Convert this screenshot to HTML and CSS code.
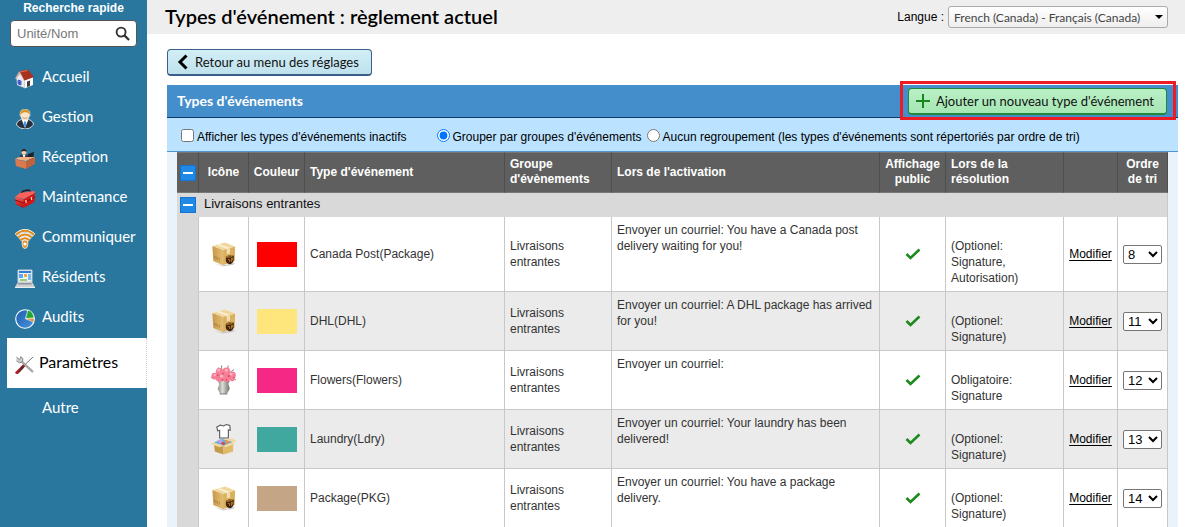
FILE: index.html
```html
<!DOCTYPE html>
<html lang="fr">
<head>
<meta charset="utf-8">
<title>Types d'événement : règlement actuel</title>
<link rel="stylesheet" href="styles.css">
</head>
<body>
<svg class="sprite" aria-hidden="true">
  <defs>
    <linearGradient id="g-box" x1="0" x2="1"><stop offset="0" stop-color="#c9984a"/><stop offset="1" stop-color="#e3be72"/></linearGradient>
    <linearGradient id="g-red" x1="0" y1="0" x2="0" y2="1"><stop offset="0" stop-color="#ff5a50"/><stop offset="1" stop-color="#b80808"/></linearGradient>
    <linearGradient id="g-vase" x1="0" x2="1"><stop offset="0" stop-color="#8c8c86"/><stop offset=".4" stop-color="#dcdcd8"/><stop offset="1" stop-color="#6c6c68"/></linearGradient>
    <linearGradient id="g-pie" x1="0" y1="0" x2="1" y2="1"><stop offset="0" stop-color="#1c5cae"/><stop offset="1" stop-color="#4a96e0"/></linearGradient>
  </defs>
  <symbol id="i-box" viewBox="0 0 28 28">
    <path d="M3 24l10 2.500 13-3-2 2-11 2z" fill="#999" opacity=".5"/>
    <path d="M1.500 5.500L13 9.500V26L2.500 21.500z" fill="url(#g-box)"/>
    <path d="M13 9.500L26 6l-.5 15.500L13 26z" fill="#dab15f"/>
    <path d="M1.500 5.500L15 1.500 26 6 13 9.500z" fill="#f0d79c"/>
    <path d="M6 4.200L9 3.300 20.500 7.500l-3.500 1z" fill="#fbeed0"/>
    <path d="M17 8.500l3.500-1v6l-3.500 1z" fill="#f4deb0"/>
    <path d="M4 16v3M5.500 16.500v3.200M7 17.500v2.500M9 18v3" stroke="#9c7434" stroke-width=".7"/>
    <path d="M16 17q4.500-3 8.500-1.500v5q-1 4-4 4.500-4.500-1-4.500-4z" fill="#3e200c"/>
    <path d="M16.500 17.500q4-2.500 7.500-2-2 2.500-7.500 2zM18 20h2v2.500M22 18.500v4M22 18.500h1.500v2H22" stroke="#c88c30" fill="none" stroke-width=".9"/>
  </symbol>
  <symbol id="i-flowers" viewBox="0 0 28 32">
    <path d="M7 8L9 3M12 6V1M18 6l1-5M21 8l4-3M3 14l-2-1M25 15l2 1" stroke="#7c8478" stroke-width="1"/>
    <path d="M8.500 17h12l-1.500 3 1.500 5-3 5.500h-7L8 25l1.500-4z" fill="url(#g-vase)"/>
    <path d="M10 30.500h8" stroke="#777"/>
    <g fill="#f77f98"><circle cx="5" cy="12" r="3.500"/><circle cx="10" cy="7.500" r="4"/><circle cx="17" cy="7" r="4"/><circle cx="23" cy="11" r="3.800"/><circle cx="10" cy="14" r="4"/><circle cx="17" cy="13.500" r="4.500"/><circle cx="23" cy="15" r="2.500"/></g>
    <g fill="#ffb5c2"><circle cx="9" cy="6" r="1.300"/><circle cx="17" cy="6" r="1.500"/><circle cx="5" cy="11" r="1.200"/><circle cx="22" cy="10" r="1.400"/><circle cx="12" cy="12" r="1.500"/></g>
    <g fill="#dd4e6c"><circle cx="13.500" cy="9.500" r="1.100"/><circle cx="8" cy="11" r="1"/><circle cx="19.500" cy="12" r="1.200"/><circle cx="13" cy="16" r="1"/><circle cx="25" cy="13.500" r=".9"/><circle cx="17" cy="16" r="1"/></g>
  </symbol>
  <symbol id="i-laundry" viewBox="0 0 28 32">
    <path d="M11 1.500l-4 2 1 4 2-.5v8h9V6.500l2 .5-.5-5L17 1l-3 1.500z" fill="#fff" stroke="#555" stroke-width="1.100"/>
    <path d="M4 20l10 3v9l-9-3z" fill="#c39a47"/><path d="M14 23l10-2v8l-10 3z" fill="#dfba69"/>
    <path d="M4 19.500l9-3.500 11 3-10 4z" fill="#5bb0dc"/>
    <path d="M7 18l4-2 3 3-3 2z" fill="#b9a4e8"/><path d="M15 16.500l6 2-4 3z" fill="#f48d49"/><path d="M11 20l3-1 2 2-2 1.500z" fill="#e33d50"/>
    <path d="M4 19.500L0 21l10 3.500 4-1.500zM24 19l4-1-5-2.500-9 .5zM14 23l2 1.500 10-3L24 19z" fill="#f1d8a0"/>
  </symbol>
  <symbol id="i-check" viewBox="0 0 16 12"><path d="M1.500 6l4 4 9-8.500" fill="none" stroke="#1d8a1d" stroke-width="2.600"/></symbol>
  <symbol id="i-home" viewBox="0 0 20 20">
    <path d="M1.500 9l4-5 4 7v8L2 16z" fill="#e9e9f0"/><path d="M9.500 11L18 8v8l-8.500 3.500z" fill="#fafafa"/>
    <path d="M0 9.500L4.500 2l5.500 8-1 1.500L5 5 1.500 10z" fill="#d9b4aa"/>
    <path d="M4.500 2L13 .5 19 8l-9.500 3.500z" fill="#a93120"/><path d="M5.500 2.800L12.500 1.500" stroke="#e0705c"/>
    <path d="M3 11l3 1v4l-3-1zM4.500 11.500v4M3 13l3 1" fill="#8ca0f0" stroke="#3441bc" stroke-width=".8"/>
    <path d="M12 12.500l3-1v5.500l-3 1z" fill="#4c3a34"/>
  </symbol>
  <symbol id="i-person" viewBox="0 0 20 20">
    <path d="M1.500 16q0-4 5-5.500h7q5 1.500 5 5.500-3 4-8.500 4t-8.500-4z" fill="#27303a" stroke="#dfe9ef" stroke-width=".9"/>
    <path d="M6.800 11h6.400L10 19z" fill="#fff"/><path d="M9 12.500h2l.5 3.500-1.500 2-1.500-2z" fill="#3e9ae4"/>
    <ellipse cx="10" cy="6" rx="4.700" ry="5.500" fill="#fae4cc"/><path d="M5 7Q4 0 10.500 0 16 .5 15 7 14 3.500 10.500 3.500 7 3 5 7z" fill="#d9952c" stroke="#fff" stroke-width=".4"/><path d="M7.500 8.500q2.500 2 5 0" stroke="#d29878" fill="none"/>
  </symbol>
  <symbol id="i-desk" viewBox="0 0 20 20">
    <path d="M4 10q0-4 3-4.500h4q3 .5 3 5z" fill="#343a42"/><path d="M7.500 5.500h3L9 10z" fill="#fff"/><circle cx="9" cy="3" r="2.500" fill="#f3d1ae"/><path d="M6.500 3Q6 0 9 0t2.500 3Q9 1 6.500 3z" fill="#2c2520"/>
    <path d="M13 5l6-2-1 7-5 1z" fill="#1c2026"/>
    <path d="M0 10l4-2 16 0-9 4z" fill="#f3ae86"/><path d="M0 10l11 2.500V20L1 17z" fill="#d9794e"/><path d="M11 12.500L20 8v7l-9 5z" fill="#c0633c"/>
  </symbol>
  <symbol id="i-toolbox" viewBox="0 0 20 20">
    <path d="M6 5q1-3 4-3.500L14 1q2 1 1.500 4" fill="none" stroke="#3a1616" stroke-width="1.300"/>
    <path d="M0 8l5-4 14-2 1 2-11 6z" fill="#f9615a"/><path d="M0 8l8.500 2.500V19L1 15.500z" fill="url(#g-red)"/><path d="M8.500 10.500L20 4l-.5 9-11 6z" fill="#d51616"/>
    <path d="M0 11l8.500 3L20 8" fill="none" stroke="#8e0606"/><path d="M11 11v3M16.500 8v3" stroke="#ffd9a4" stroke-width="1.300"/>
  </symbol>
  <symbol id="i-wifi" viewBox="0 0 20 20">
    <g fill="none" stroke="#fff" stroke-width="3.200"><path d="M.8 6Q10-2.500 19.200 6M3.200 8.500Q10 2.500 16.800 8.500M5.500 11.200Q10 7.200 14.500 11.200"/></g>
    <g fill="none" stroke="#e08a1c" stroke-width="1.900"><path d="M.8 6Q10-2.500 19.200 6M3.200 8.500Q10 2.500 16.800 8.500M5.500 11.200Q10 7.200 14.500 11.200"/></g>
    <path d="M7 14q0-3 3-3t3 3l-.5 3q-.5 2.500-2.500 2.500T7.500 17z" fill="#e8962a" stroke="#fff" stroke-width=".7"/><circle cx="10" cy="15" r="1.600" fill="#fff"/>
  </symbol>
  <symbol id="i-laptop" viewBox="0 0 20 20">
    <path d="M3 1h14v12H3z" fill="#eef3f7" stroke="#c2c8cc"/><path d="M4 2h12v2H4z" fill="#2d7ed6"/><path d="M4 5h4v4H4z" fill="#58aaf0"/><path d="M9 5h3v3H9z" fill="#f1a73c"/><path d="M13 5h3v6h-3z" fill="#78bdf0"/><path d="M5 10h7v2H5z" fill="#96cf78"/>
    <path d="M3 13h14l3 5H0z" fill="#cfd2d4"/><path d="M3.500 14h13l.5 1.500H3z" fill="#8f9498"/><path d="M0 18h20v1H0z" fill="#eee"/>
  </symbol>
  <symbol id="i-pie" viewBox="0 0 20 20">
    <circle cx="10" cy="10" r="9.300" fill="url(#g-pie)" stroke="#fff" stroke-width="1.100"/>
    <path d="M10.500 9.500L13 .8A9.300 9.300 0 0 1 19 9z" fill="#27a534" stroke="#fff" stroke-width=".7"/><path d="M10.500 9.800L19.200 9.500q0 2-.8 3.500z" fill="#f08c28" stroke="#fff" stroke-width=".5"/>
  </symbol>
  <symbol id="i-tools" viewBox="0 0 20 20">
    <path d="M18 2L9 10.500" stroke="#777" stroke-width="1"/><path d="M8.500 9l2 2L3 19q-2 .5-3-1.500z" fill="#b01b26"/><path d="M7 10.500l2 2L3.500 18z" fill="#333"/>
    <path d="M6 6l12 11" stroke="#8b8b8b" stroke-width="2.200"/><path d="M6 6l12 11" stroke="#d2d2d2" stroke-width=".8"/>
    <path d="M1.500 2l3 2.500L6 1.500q3 2 1.500 5.500-3 2-6-1" fill="#c9c9c9" stroke="#777" stroke-width=".8"/>
  </symbol>
</svg>

<div class="app">
  <aside class="sidebar">
    <form class="search">
      <label class="search-label" for="q">Recherche rapide</label>
      <div class="search-box">
        <input id="q" type="text" placeholder="Unité/Nom">
        <button class="search-go" type="button" aria-label="Rechercher"><svg viewBox="0 0 16 16"><circle cx="6.500" cy="6.500" r="4.800" fill="none" stroke="#333" stroke-width="2"/><path d="M10 10l5 5" stroke="#333" stroke-width="2.400"/></svg></button>
      </div>
    </form>
    <nav class="nav">
      <a href="#"><svg><use href="#i-home"/></svg>Accueil</a>
      <a href="#"><svg><use href="#i-person"/></svg>Gestion</a>
      <a href="#"><svg><use href="#i-desk"/></svg>Réception</a>
      <a href="#"><svg><use href="#i-toolbox"/></svg>Maintenance</a>
      <a href="#"><svg><use href="#i-wifi"/></svg>Communiquer</a>
      <a href="#"><svg><use href="#i-laptop"/></svg>Résidents</a>
      <a href="#"><svg><use href="#i-pie"/></svg>Audits</a>
      <a href="#" class="active"><svg><use href="#i-tools"/></svg>Paramètres</a>
      <a href="#" class="plain">Autre</a>
    </nav>
  </aside>

  <main class="main">
    <header class="topbar">
      <h1>Types d'événement : règlement actuel</h1>
      <div class="lang">
        <label for="lang">Langue :</label>
        <span class="lang-select"><select id="lang"><option>French (Canada) - Français (Canada)</option></select></span>
      </div>
    </header>

    <div class="content">
      <button type="button" class="btn btn-back"><svg viewBox="0 0 12 16"><path d="M10 1.500L3.500 8l6.500 6.500" fill="none" stroke="#000" stroke-width="3"/></svg>Retour au menu des réglages</button>

      <section class="panel">
        <div class="panel-head">
          <h2>Types d'événements</h2>
          <div class="callout">
            <button type="button" class="btn btn-add"><svg viewBox="0 0 14 14"><path d="M7 0v14M0 7h14" stroke="#17871c" stroke-width="2"/></svg>Ajouter un nouveau type d'événement</button>
          </div>
        </div>
        <div class="filters">
          <label class="inactive"><input type="checkbox">Afficher les types d'événements inactifs</label>
          <label><input type="radio" name="grp" checked>Grouper par groupes d'événements</label>
          <label><input type="radio" name="grp">Aucun regroupement (les types d'événements sont répertoriés par ordre de tri)</label>
        </div>
        <div class="table-wrap">
          <table>
            <colgroup><col class="c-tog"><col class="c-icon"><col class="c-color"><col class="c-type"><col class="c-group"><col class="c-act"><col class="c-pub"><col class="c-res"><col class="c-edit"><col class="c-sort"></colgroup>
            <thead>
              <tr>
                <th class="tog"><button type="button" class="minus" aria-label="Tout réduire"></button></th>
                <th class="mid">Icône</th><th class="mid">Couleur</th><th>Type d'événement</th><th>Groupe d'évènements</th><th>Lors de l'activation</th><th class="mid">Affichage public</th><th>Lors de la résolution</th><th></th><th class="mid">Ordre<br>de tri</th>
              </tr>
            </thead>
            <tbody>
              <tr class="group"><td class="tog"><button type="button" class="minus" aria-label="Réduire le groupe"></button></td><td colspan="9">Livraisons entrantes</td></tr>
              <tr>
                <td class="gutter"></td><td class="mid"><svg class="ico"><use href="#i-box"/></svg></td><td class="mid"><span class="swatch red"></span></td><td>Canada Post(Package)</td><td>Livraisons entrantes</td><td class="act">Envoyer un courriel: You have a Canada post delivery waiting for you!</td><td class="mid"><svg class="check"><use href="#i-check"/></svg></td><td class="res">(Optionel: Signature, Autorisation)</td><td class="mid edit"><a href="#">Modifier</a></td><td class="mid sort"><select aria-label="Ordre de tri"><option>8</option><option>11</option></select></td>
              </tr>
              <tr class="alt">
                <td class="gutter"></td><td class="mid"><svg class="ico"><use href="#i-box"/></svg></td><td class="mid"><span class="swatch yellow"></span></td><td>DHL(DHL)</td><td>Livraisons entrantes</td><td class="act">Envoyer un courriel: A DHL package has arrived for you!</td><td class="mid"><svg class="check"><use href="#i-check"/></svg></td><td class="res">(Optionel: Signature)</td><td class="mid edit"><a href="#">Modifier</a></td><td class="mid sort"><select aria-label="Ordre de tri"><option>11</option></select></td>
              </tr>
              <tr>
                <td class="gutter"></td><td class="mid"><svg class="ico tall"><use href="#i-flowers"/></svg></td><td class="mid"><span class="swatch pink"></span></td><td>Flowers(Flowers)</td><td>Livraisons entrantes</td><td class="act">Envoyer un courriel:</td><td class="mid"><svg class="check"><use href="#i-check"/></svg></td><td class="res">Obligatoire: Signature</td><td class="mid edit"><a href="#">Modifier</a></td><td class="mid sort"><select aria-label="Ordre de tri"><option>12</option></select></td>
              </tr>
              <tr class="alt">
                <td class="gutter"></td><td class="mid"><svg class="ico tall"><use href="#i-laundry"/></svg></td><td class="mid"><span class="swatch teal"></span></td><td>Laundry(Ldry)</td><td>Livraisons entrantes</td><td class="act">Envoyer un courriel: Your laundry has been delivered!</td><td class="mid"><svg class="check"><use href="#i-check"/></svg></td><td class="res">(Optionel: Signature)</td><td class="mid edit"><a href="#">Modifier</a></td><td class="mid sort"><select aria-label="Ordre de tri"><option>13</option></select></td>
              </tr>
              <tr>
                <td class="gutter"></td><td class="mid"><svg class="ico"><use href="#i-box"/></svg></td><td class="mid"><span class="swatch tan"></span></td><td>Package(PKG)</td><td>Livraisons entrantes</td><td class="act">Envoyer un courriel: You have a package delivery.</td><td class="mid"><svg class="check"><use href="#i-check"/></svg></td><td class="res">(Optionel: Signature)</td><td class="mid edit"><a href="#">Modifier</a></td><td class="mid sort"><select aria-label="Ordre de tri"><option>14</option></select></td>
              </tr>
            </tbody>
          </table>
        </div>
      </section>
    </div>
  </main>
</div>
</body>
</html>
```
FILE: styles.css
```css
* { box-sizing: border-box; }
body { margin: 0; background: #fff; color: #000; font: 12px/16px "Liberation Sans", Arial, sans-serif; }
.sprite { position: absolute; width: 0; height: 0; }
.app { display: flex; height: 100vh; overflow: hidden; }

.sidebar { flex: 0 0 147px; min-width: 0; background: #29779f; }
.search { padding: 0 10px; }
.search-label { display: block; text-align: center; color: #fff; font-weight: bold; line-height: 16px; }
.search-box { display: flex; align-items: center; height: 27px; margin-top: 4px; padding: 0 6px; background: #fff; border: 1px solid #555; border-radius: 4px; }
.search-box input { flex: 1; width: 100%; min-width: 0; padding: 0; border: 0; outline: 0; background: none; font: 13px "Liberation Sans", Arial, sans-serif; }
.search-box input::placeholder { color: #777; }
.search-go { width: 15px; height: 15px; padding: 0; border: 0; background: none; }
.search-go svg { display: block; width: 15px; height: 15px; }
.nav { display: flex; flex-direction: column; padding: 9px 0 0 7px; }
.nav a { display: flex; align-items: center; gap: 7px; height: 40px; padding-left: 8px; color: #fff; font: 15px/20px Lato, sans-serif; text-decoration: none; }
.nav svg { width: 20px; height: 20px; margin-top: 6px; }
.nav a.active { height: 50px; gap: 4px; margin-top: 2px; padding-bottom: 2px; background: #fff; color: #000; border-right: 1px dotted #ccc; font-size: 16px; }
.nav a.plain { padding-left: 35px; padding-bottom: 2px; }

.main { flex: 1; min-width: 0; }
.topbar { display: flex; justify-content: space-between; align-items: center; height: 34px; padding: 0 17px 0 18px; background: #eee; }
.topbar h1 { margin: 0 0 2px; font: 600 20px/24px Lato, sans-serif; }
.lang { display: flex; align-items: center; gap: 4px; }
.lang-select { position: relative; width: 220px; }
.lang-select select { display: block; width: 100%; height: 22px; padding: 0 5px; appearance: none; border: 1px solid #aaa; border-radius: 3px; background: linear-gradient(#fff, #eee); color: #444; font: 12px Lato, sans-serif; }
.lang-select::after { content: ""; position: absolute; right: 5px; top: 9px; border: 4px solid transparent; border-top-color: #000; border-bottom: 0; pointer-events: none; }

.content { padding: 15px 7px 0 20px; }
.btn { display: flex; align-items: center; height: 27px; border-radius: 4px; color: #111; font: 13px/20px Lato, sans-serif; white-space: nowrap; }
.btn-back { gap: 6px; padding: 0 12px 0 8px; border: 1px solid #3a5f8a; border-bottom-width: 2px; background: linear-gradient(#d2eef6, #bfe2ec); }
.btn-back svg { width: 13px; height: 16px; }
.btn-add { gap: 6px; padding: 0 12px 0 7px; border: 1px solid #218a3a; border-bottom-width: 2px; background: linear-gradient(#b9f0c5, #a6e6b4); }
.btn-add svg { width: 14px; height: 14px; }

.panel { margin-top: 9px; }
.panel-head { display: flex; align-items: center; justify-content: space-between; height: 33px; padding: 0 11px 0 10px; background: #458ecc; border-bottom: 1px solid #0f3a66; }
.panel-head h2 { margin: 0; color: #fff; font: bold 14px/20px Lato, sans-serif; }
.callout { position: relative; }
.callout::after { content: ""; position: absolute; inset: -7px -9px -5px -8px; border: 3px solid #ed1c24; pointer-events: none; }
.filters { display: flex; align-items: center; height: 34px; padding: 4px 14px 0; background: #bbe3ff; border-bottom: 1px solid #4c94d4; white-space: nowrap; }
.filters label { display: flex; align-items: center; gap: 3px; margin-right: 5px; }
.filters label.inactive { margin-right: 30px; }
.filters input { width: 13px; height: 13px; margin: 0 0 3px; accent-color: #0075ff; }

.table-wrap { padding: 0 10px; background: #eaf2fa; }
table { width: 100%; table-layout: fixed; border-collapse: separate; border-spacing: 0; }
.c-tog { width: 22px; } .c-icon { width: 50px; } .c-color { width: 56px; } .c-type { width: 200px; } .c-group { width: 107px; }
.c-pub { width: 66px; } .c-res { width: 118px; } .c-edit { width: 54px; } .c-sort { width: 50px; }
th { height: 41px; padding: 4px 5px 5px; background: #5f5f5f; color: #fff; line-height: 15px; text-align: left; border-right: 1px solid #4e4e4e; border-top: 1px solid #777; border-bottom: 1px solid #777; }
td { padding: 5px; background: #fff; color: #333; border-right: 1px solid #c8c8c8; border-bottom: 1px solid #c8c8c8; }
.alt td { background: #ebebeb; }
th.mid, td.mid { padding-left: 0; padding-right: 0; text-align: center; }
th.tog, td.tog { padding: 0 0 0 3px; }
tr td.gutter { background: #d9d9d9; border-bottom-color: #d9d9d9; }
.group td { height: 24px; padding-top: 0; padding-bottom: 2px; background: #d9d9d9; color: #111; font-size: 13px; border-bottom: 0; }
.group td.tog { padding-bottom: 0; border-right-color: #d9d9d9; }
td.act { vertical-align: top; }
td.res { padding-top: 21px; }
.minus { display: block; width: 16px; height: 16px; padding: 0; border: 1px solid #1673cf; background: linear-gradient(#fff, #fff) center / 10px 2px no-repeat #1f8ae6; }
.ico { display: block; width: 26px; height: 26px; margin: 0 auto; }
.ico.tall { width: 27px; height: 32px; }
.swatch { display: block; width: 40px; height: 25px; margin: 0 auto; }
.red { background: #f00; } .yellow { background: #ffe67c; } .pink { background: #f62885; } .teal { background: #40a89f; } .tan { background: #c4a586; }
.check { display: block; width: 16px; height: 12px; margin: 0 auto; }
.edit a { color: #000; text-underline-offset: 2px; }
.sort select { display: block; width: 39px; height: 19px; margin: 0 auto; font: 13px "Liberation Sans", Arial, sans-serif; background: #fff; border: 1px solid #767676; border-radius: 2px; color: #000; }
```
